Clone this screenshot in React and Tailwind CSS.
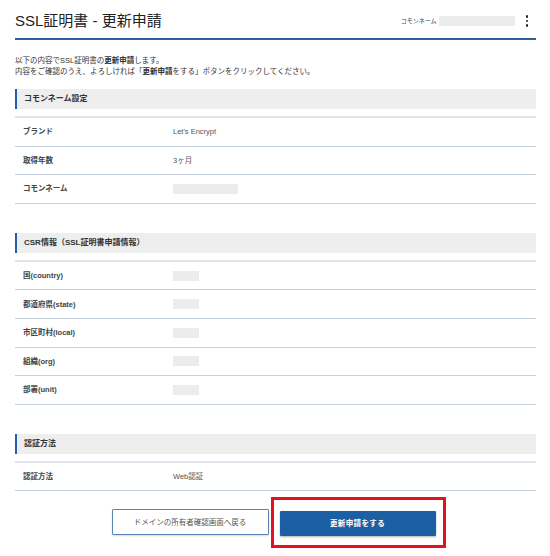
import React from 'react';

const font = { fontFamily: '"Liberation Sans", "Noto Sans CJK JP", sans-serif' };

const SectionHeader = ({ title }) => (
  <div className="h-[20px] flex items-center bg-[#eeeeee] border-l-2 border-[#2160a8] pl-[7px]">
    <span className="text-[8px] font-bold text-[#333]">{title}</span>
  </div>
);

const Placeholder = ({ w }) => <div className={`${w} h-[10px] bg-[#ececec]`} />;

const Row = ({ label, children }) => (
  <div className="h-[28.6px] flex items-center border-b border-[#c5d1de] pl-[8px]">
    <div className="w-[150px] text-[7.5px] font-bold text-[#444]">{label}</div>
    <div className="text-[7.5px] text-[#555]">{children}</div>
  </div>
);

const Section = ({ title, children }) => (
  <div>
    <SectionHeader title={title} />
    <div className="mt-[7px] border-t-2 border-[#dfe5ee]">{children}</div>
  </div>
);

export default function App() {
  return (
    <div className="w-[550px] h-[556px] bg-white px-[15px] pr-[14px]" style={font}>
      <div className="h-[40px] flex items-center justify-between border-b-2 border-[#2b5f9f] pt-[4px]">
        <h1 className="text-[15px] text-[#222]">SSL証明書 - 更新申請</h1>
        <div className="flex items-center">
          <span className="text-[6px] text-[#444] mr-[2px]">コモンネーム</span>
          <div className="w-[76px] h-[10px] bg-[#ececec]" />
          <div className="ml-[11px] mr-[8px] flex flex-col gap-[2px]">
            <span className="w-[2.5px] h-[2.5px] bg-[#222] rounded-full" />
            <span className="w-[2.5px] h-[2.5px] bg-[#222] rounded-full" />
            <span className="w-[2.5px] h-[2.5px] bg-[#222] rounded-full" />
          </div>
        </div>
      </div>

      <div className="mt-[15px] text-[7.5px] leading-[11px] text-[#333]">
        <p>以下の内容でSSL証明書の<b>更新申請</b>します。</p>
        <p>内容をご確認のうえ、よろしければ「<b>更新申請</b>をする」ボタンをクリックしてください。</p>
      </div>

      <div className="mt-[12px]">
        <Section title="コモンネーム設定">
          <Row label="ブランド">Let's Encrypt</Row>
          <Row label="取得年数">3ヶ月</Row>
          <Row label="コモンネーム"><Placeholder w="w-[65px]" /></Row>
        </Section>
      </div>

      <div className="mt-[29px]">
        <Section title="CSR情報（SSL証明書申請情報）">
          <Row label="国(country)"><Placeholder w="w-[26px]" /></Row>
          <Row label="都道府県(state)"><Placeholder w="w-[26px]" /></Row>
          <Row label="市区町村(local)"><Placeholder w="w-[26px]" /></Row>
          <Row label="組織(org)"><Placeholder w="w-[26px]" /></Row>
          <Row label="部署(unit)"><Placeholder w="w-[26px]" /></Row>
        </Section>
      </div>

      <div className="mt-[29px]">
        <Section title="認証方法">
          <Row label="認証方法">Web認証</Row>
        </Section>
      </div>

      <div className="mt-[18px] flex justify-center gap-[11px] pr-[4px]">
        <button className="w-[157px] h-[26px] bg-white border border-[#5b84b6] rounded-[1px] shadow-[0_1px_2px_rgba(0,0,0,0.15)] text-[7.5px] text-[#555]">
          ドメインの所有者確認画面へ戻る
        </button>
        <div className="relative">
          <button className="w-[156px] h-[25px] bg-[#1d5fa3] rounded-[1px] shadow-[0_1px_2px_rgba(0,0,0,0.3)] text-[7.5px] font-bold text-white tracking-wider">
            更新申請をする
          </button>
          <div className="absolute top-[-12px] bottom-[-12px] left-[-9px] right-[-10px] border-[3px] border-[#e8101c] pointer-events-none" />
        </div>
      </div>
    </div>
  );
}
